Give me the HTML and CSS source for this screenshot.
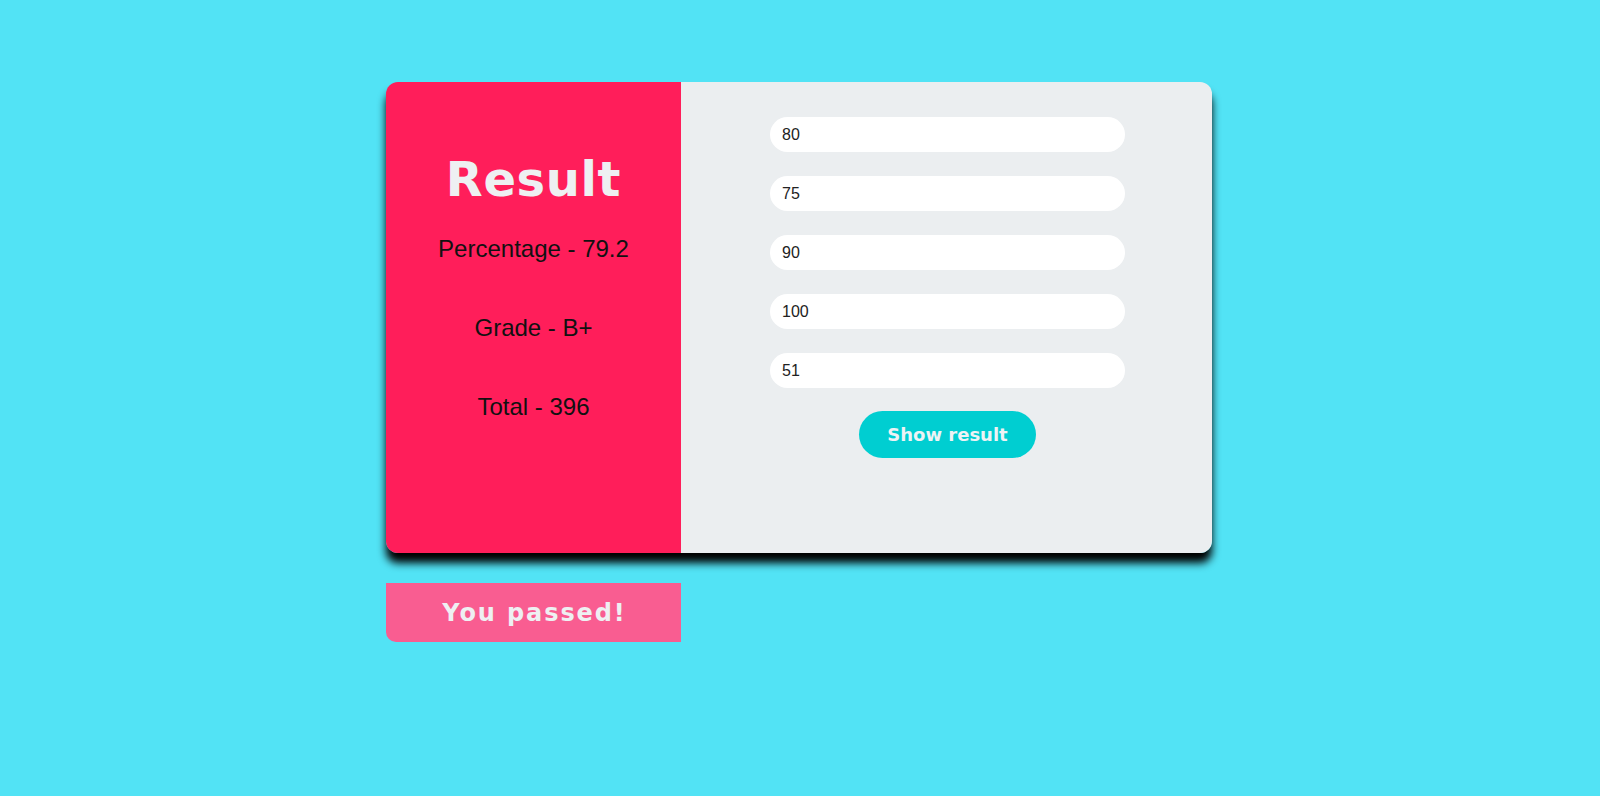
FILE: index.html
```html
<!DOCTYPE html>
<html lang="en">
<head>
<meta charset="utf-8">
<title>Result</title>
<link rel="stylesheet" href="styles.css">
</head>
<body>
<main class="wrap">
  <section class="card">
    <div class="result-panel">
      <h1 class="title">Result</h1>
      <p class="stat">Percentage - 79.2</p>
      <p class="stat">Grade - B+</p>
      <p class="stat">Total - 396</p>
    </div>
    <form class="form-panel">
      <input class="mark" type="text" value="80">
      <input class="mark" type="text" value="75">
      <input class="mark" type="text" value="90">
      <input class="mark" type="text" value="100">
      <input class="mark" type="text" value="51">
      <button class="show-btn" type="button">Show result</button>
    </form>
  </section>
  <div class="status">You passed!</div>
</main>
</body>
</html>
```
FILE: styles.css
```css
html, body {
  margin: 0;
  padding: 0;
}
body {
  background: #52e3f5;
  font-family: "Liberation Sans", Arial, sans-serif;
  min-height: 796px;
}
.wrap {
  width: 826px;
  margin: 82px auto 0;
  position: relative;
  left: -1px;
}
.card {
  display: flex;
  height: 471px;
  border-radius: 12px;
  overflow: hidden;
  box-shadow: 0 10px 8px #000;
}
.result-panel {
  width: 295px;
  flex: none;
  background: #ff1e5a;
  display: flex;
  flex-direction: column;
  align-items: center;
  padding-top: 73px;
  box-sizing: border-box;
}
.title {
  margin: 0 0 34px;
  font-family: "DejaVu Sans", sans-serif;
  font-size: 48px;
  line-height: 48px;
  font-weight: 700;
  letter-spacing: 0.6px;
  color: #eef0f2;
}
.stat {
  margin: 0 0 55px;
  font-size: 24px;
  line-height: 24px;
  color: #111;
}
.form-panel {
  flex: 1;
  background: #ebeef0;
  margin: 0;
  padding-top: 35px;
  padding-left: 2px;
  display: flex;
  flex-direction: column;
  align-items: center;
  gap: 24px;
}
.mark {
  width: 355px;
  height: 35px;
  box-sizing: border-box;
  border: none;
  border-radius: 18px;
  background: #fff;
  padding: 0 12px;
  font-family: "Liberation Sans", Arial, sans-serif;
  font-size: 16px;
  color: #222;
  outline: none;
}
.show-btn {
  margin-top: -1px;
  width: 177px;
  height: 47px;
  border: none;
  border-radius: 24px;
  background: #00ced1;
  color: #eef3f5;
  font-family: "DejaVu Sans", sans-serif;
  font-weight: 700;
  font-size: 18px;
  cursor: pointer;
}
.status {
  margin-top: 30px;
  width: 295px;
  height: 59px;
  background: #f95d91;
  border-bottom-left-radius: 10px;
  color: #eef0f2;
  font-family: "DejaVu Sans", sans-serif;
  font-weight: 700;
  font-size: 24px;
  letter-spacing: 1.9px;
  display: flex;
  align-items: center;
  justify-content: center;
  padding-left: 2px;
  box-sizing: border-box;
}
```
